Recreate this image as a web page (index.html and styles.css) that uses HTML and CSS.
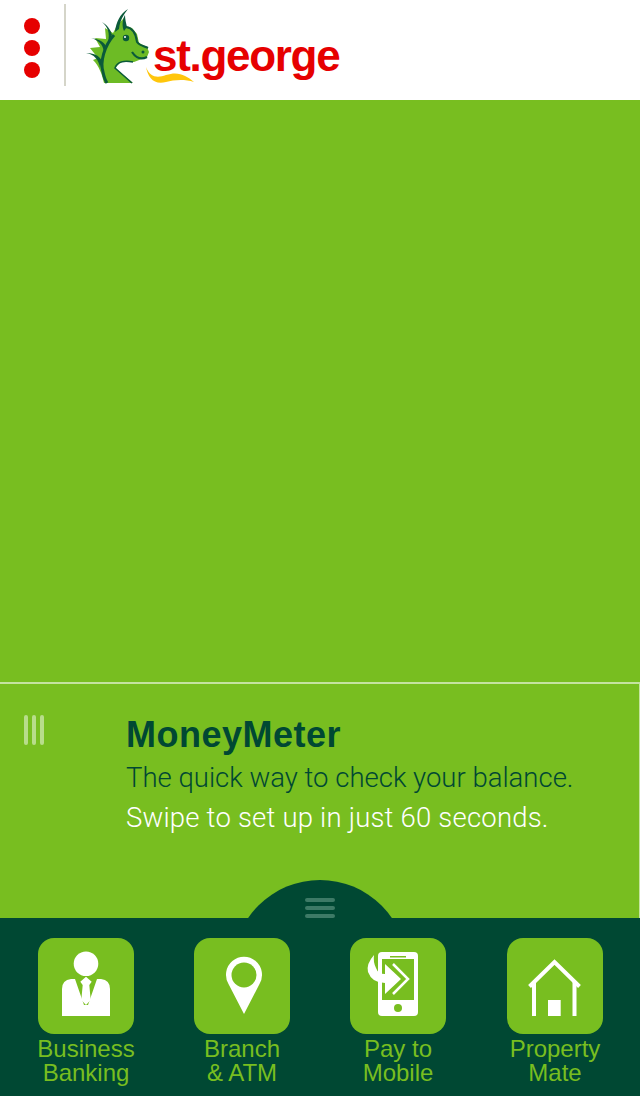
FILE: index.html
```html
<!DOCTYPE html>
<html lang="en">
<head>
  <meta charset="UTF-8">
  <title>St.George</title>
  <link rel="stylesheet" href="styles.css">
</head>
<body>

  <header class="topbar">
    <div class="dots"><span></span><span></span><span></span></div>
    <div class="divider"></div>
    <div class="logo">
      <svg class="dragon" width="120" height="95" viewBox="80 0 120 95">
        <path d="M146 67C150 78 158 78 166 75C178 71 186 75 194 82C184 79 174 80 166 82C154 85 148 78 146 67Z" fill="#ffc60b"/>
        <path d="M104 83C102 74 99 66 93 60L98 58L90 48L100 47L95 38L106 39L105 28L113 33L118 24L124 18L125 26L132 28L137 34L139 43L147 47L149 52L147 57L134 62L121 62L115 68L133 83Z" fill="#6dbb25"/>
        <path d="M128 9C120 14 116 22 115 32L119 29C120 20 124 14 128 9Z" fill="#0b5a3a"/>
        <path d="M125 15C122 20 122 27 124 31L127 27C126 23 125 19 125 15Z" fill="#0b5a3a"/>
        <path d="M102 22C108 27 110 33 108 42L112 35C111 30 107 25 102 22Z" fill="#0b5a3a"/>
        <path d="M91 38C98 40 103 44 104 52L106 46C103 41 98 39 91 38Z" fill="#0b5a3a"/>
        <path d="M86 53C94 54 99 60 100 68L102 61C99 55 93 53 86 53Z" fill="#0b5a3a"/>
        <path d="M114 35C104 46 100 62 103 72C104 77 105 80 107 83" fill="none" stroke="#0b5a3a" stroke-width="3"/>
        <path d="M126 27C133 28 136 33 137 42C140 46 144 46 148 48" fill="none" stroke="#0b5a3a" stroke-width="2"/>
        <path d="M132 52C136 58 141 60 147 57" fill="none" stroke="#0b5a3a" stroke-width="2.200"/>
        <path d="M133 62C124 60 117 62 115 68L132 83" fill="none" stroke="#0b5a3a" stroke-width="1.500"/>
        <circle cx="126" cy="38" r="3.200" fill="#0b5a3a"/>
        <circle cx="125" cy="37" r="1" fill="#fff"/>
        <circle cx="143" cy="52" r="1.500" fill="#0b5a3a"/>
      </svg>
      <span class="wordmark">st.george</span>
    </div>
  </header>

  <main class="hero"></main>

  <section class="promo">
    <div class="grip"><span></span><span></span><span></span></div>
    <div class="promo-text">
      <h1>MoneyMeter</h1>
      <p class="dark">The quick way to check your balance.</p>
      <p>Swipe to set up in just 60 seconds.</p>
    </div>
  </section>

  <footer class="dock">
    <div class="bump"><span></span><span></span><span></span></div>

    <a class="item">
      <div class="tile">
        <svg width="96" height="96" viewBox="0 0 96 96">
          <circle cx="48" cy="25.700" r="12.300" fill="#fff"/>
          <path d="M24 78V51Q24 42 33 41H37L46 67H50L59 41H63Q72 42 72 51V78Z" fill="#fff"/>
          <path d="M48 38.700L53.700 43.700L51.300 47L52.700 62L48 67L43.300 62L44.700 47L42.300 43.700Z" fill="#fff"/>
        </svg>
      </div>
      <span>Business<br>Banking</span>
    </a>

    <a class="item">
      <div class="tile">
        <svg width="96" height="96" viewBox="0 0 96 96">
          <path d="M50 76L34.500 46A18 18 0 1 1 65.500 46Z" fill="#fff"/>
          <circle cx="50" cy="37" r="12.500" fill="#78be20"/>
        </svg>
      </div>
      <span>Branch<br>&amp; ATM</span>
    </a>

    <a class="item">
      <div class="tile">
        <svg width="96" height="96" viewBox="0 0 96 96">
          <rect x="28" y="14" width="40" height="64" rx="4" fill="#fff"/>
          <rect x="32" y="21" width="32" height="41" fill="#78be20"/>
          <rect x="40" y="18" width="16" height="1.500" fill="#78be20"/>
          <circle cx="48" cy="70" r="4" fill="#78be20"/>
          <path d="M24 17Q16 26 18 34Q22 45 35 45V56L51 41L35 26V36Q28 36 26 30Q23 24 24 17Z" fill="#fff"/>
          <path d="M43 26L58 41L43 56" fill="none" stroke="#fff" stroke-width="2.500"/>
        </svg>
      </div>
      <span>Pay to<br>Mobile</span>
    </a>

    <a class="item">
      <div class="tile">
        <svg width="96" height="96" viewBox="0 0 96 96">
          <path d="M22.500 48.500L47.500 24L72.500 48.500" fill="none" stroke="#fff" stroke-width="4"/>
          <path d="M27 44V78M67.500 44V78" fill="none" stroke="#fff" stroke-width="4"/>
          <rect x="41" y="62" width="12.700" height="16" fill="#fff"/>
        </svg>
      </div>
      <span>Property<br>Mate</span>
    </a>
  </footer>

</body>
</html>
```

FILE: styles.css
```css
* {
  box-sizing: border-box;
}
body {
  margin: 0;
  width: 640px;
  height: 1096px;
  overflow: hidden;
  display: flex;
  flex-direction: column;
  font-family: "Liberation Sans", Arial, sans-serif;
  background-color: #78be20;
}
.topbar {
  height: 100px;
  flex: none;
  background-color: #fff;
  display: flex;
  align-items: flex-start;
  padding-left: 24px;
}
.dots {
  margin-top: 18px;
  display: flex;
  flex-direction: column;
  gap: 6px;
}
.dots span {
  width: 16px;
  height: 16px;
  border-radius: 50%;
  background-color: #e60000;
}
.divider {
  width: 2px;
  height: 82px;
  margin: 4px 0 0 24px;
  background-color: #d5d5c9;
}
.logo {
  display: flex;
  margin-left: 14px;
}
.wordmark {
  position: relative;
  margin: 31px 0 0 -47px;
  font-size: 44px;
  line-height: 50px;
  font-weight: bold;
  color: #e60000;
  letter-spacing: -1.300px;
}
.hero {
  flex: 1;
}
.promo {
  height: 236px;
  flex: none;
  display: flex;
  border-top: 2px solid #c5e3a0;
  border-right: 1px solid #c5e3a0;
  padding: 31px 0 0 24px;
}
.grip {
  width: 20px;
  height: 30px;
  display: flex;
  justify-content: space-between;
}
.grip span {
  width: 4px;
  border-radius: 2px;
  background-color: #b8dd8a;
}
.promo-text {
  margin-left: 82px;
}
.promo-text h1 {
  margin: 0 0 3px;
  font-size: 36px;
  line-height: 40px;
  color: #004833;
  letter-spacing: 0.500px;
}
.promo-text p {
  margin: 0;
  font-family: Roboto, "Liberation Sans", sans-serif;
  font-weight: 300;
  font-size: 27.500px;
  line-height: 40px;
  color: #fff;
  letter-spacing: 0.200px;
}
.promo-text p.dark {
  color: #004833;
  letter-spacing: 0;
}
.dock {
  position: relative;
  height: 178px;
  flex: none;
  display: grid;
  grid-template-columns: 156px 156px 156px 158px;
  padding: 20px 0 0 8px;
  background-color: #004833;
}
.bump {
  position: absolute;
  left: 233px;
  top: -38px;
  width: 174px;
  height: 38px;
  overflow: hidden;
  display: flex;
  flex-direction: column;
  align-items: center;
  gap: 4px;
  padding-top: 18px;
}
.bump::before {
  content: "";
  position: absolute;
  left: 0;
  top: 0;
  width: 174px;
  height: 174px;
  border-radius: 50%;
  background-color: #004833;
}
.bump span {
  position: relative;
  width: 30px;
  height: 4px;
  flex: none;
  border-radius: 2px;
  background-color: #3d7a66;
}
.item {
  display: flex;
  flex-direction: column;
  align-items: center;
}
.tile {
  width: 96px;
  height: 96px;
  border-radius: 16px;
  background-color: #78be20;
}
.tile svg {
  display: block;
}
.item span {
  margin-top: 3px;
  font-size: 24px;
  line-height: 24px;
  text-align: center;
  color: #78be20;
}
```
